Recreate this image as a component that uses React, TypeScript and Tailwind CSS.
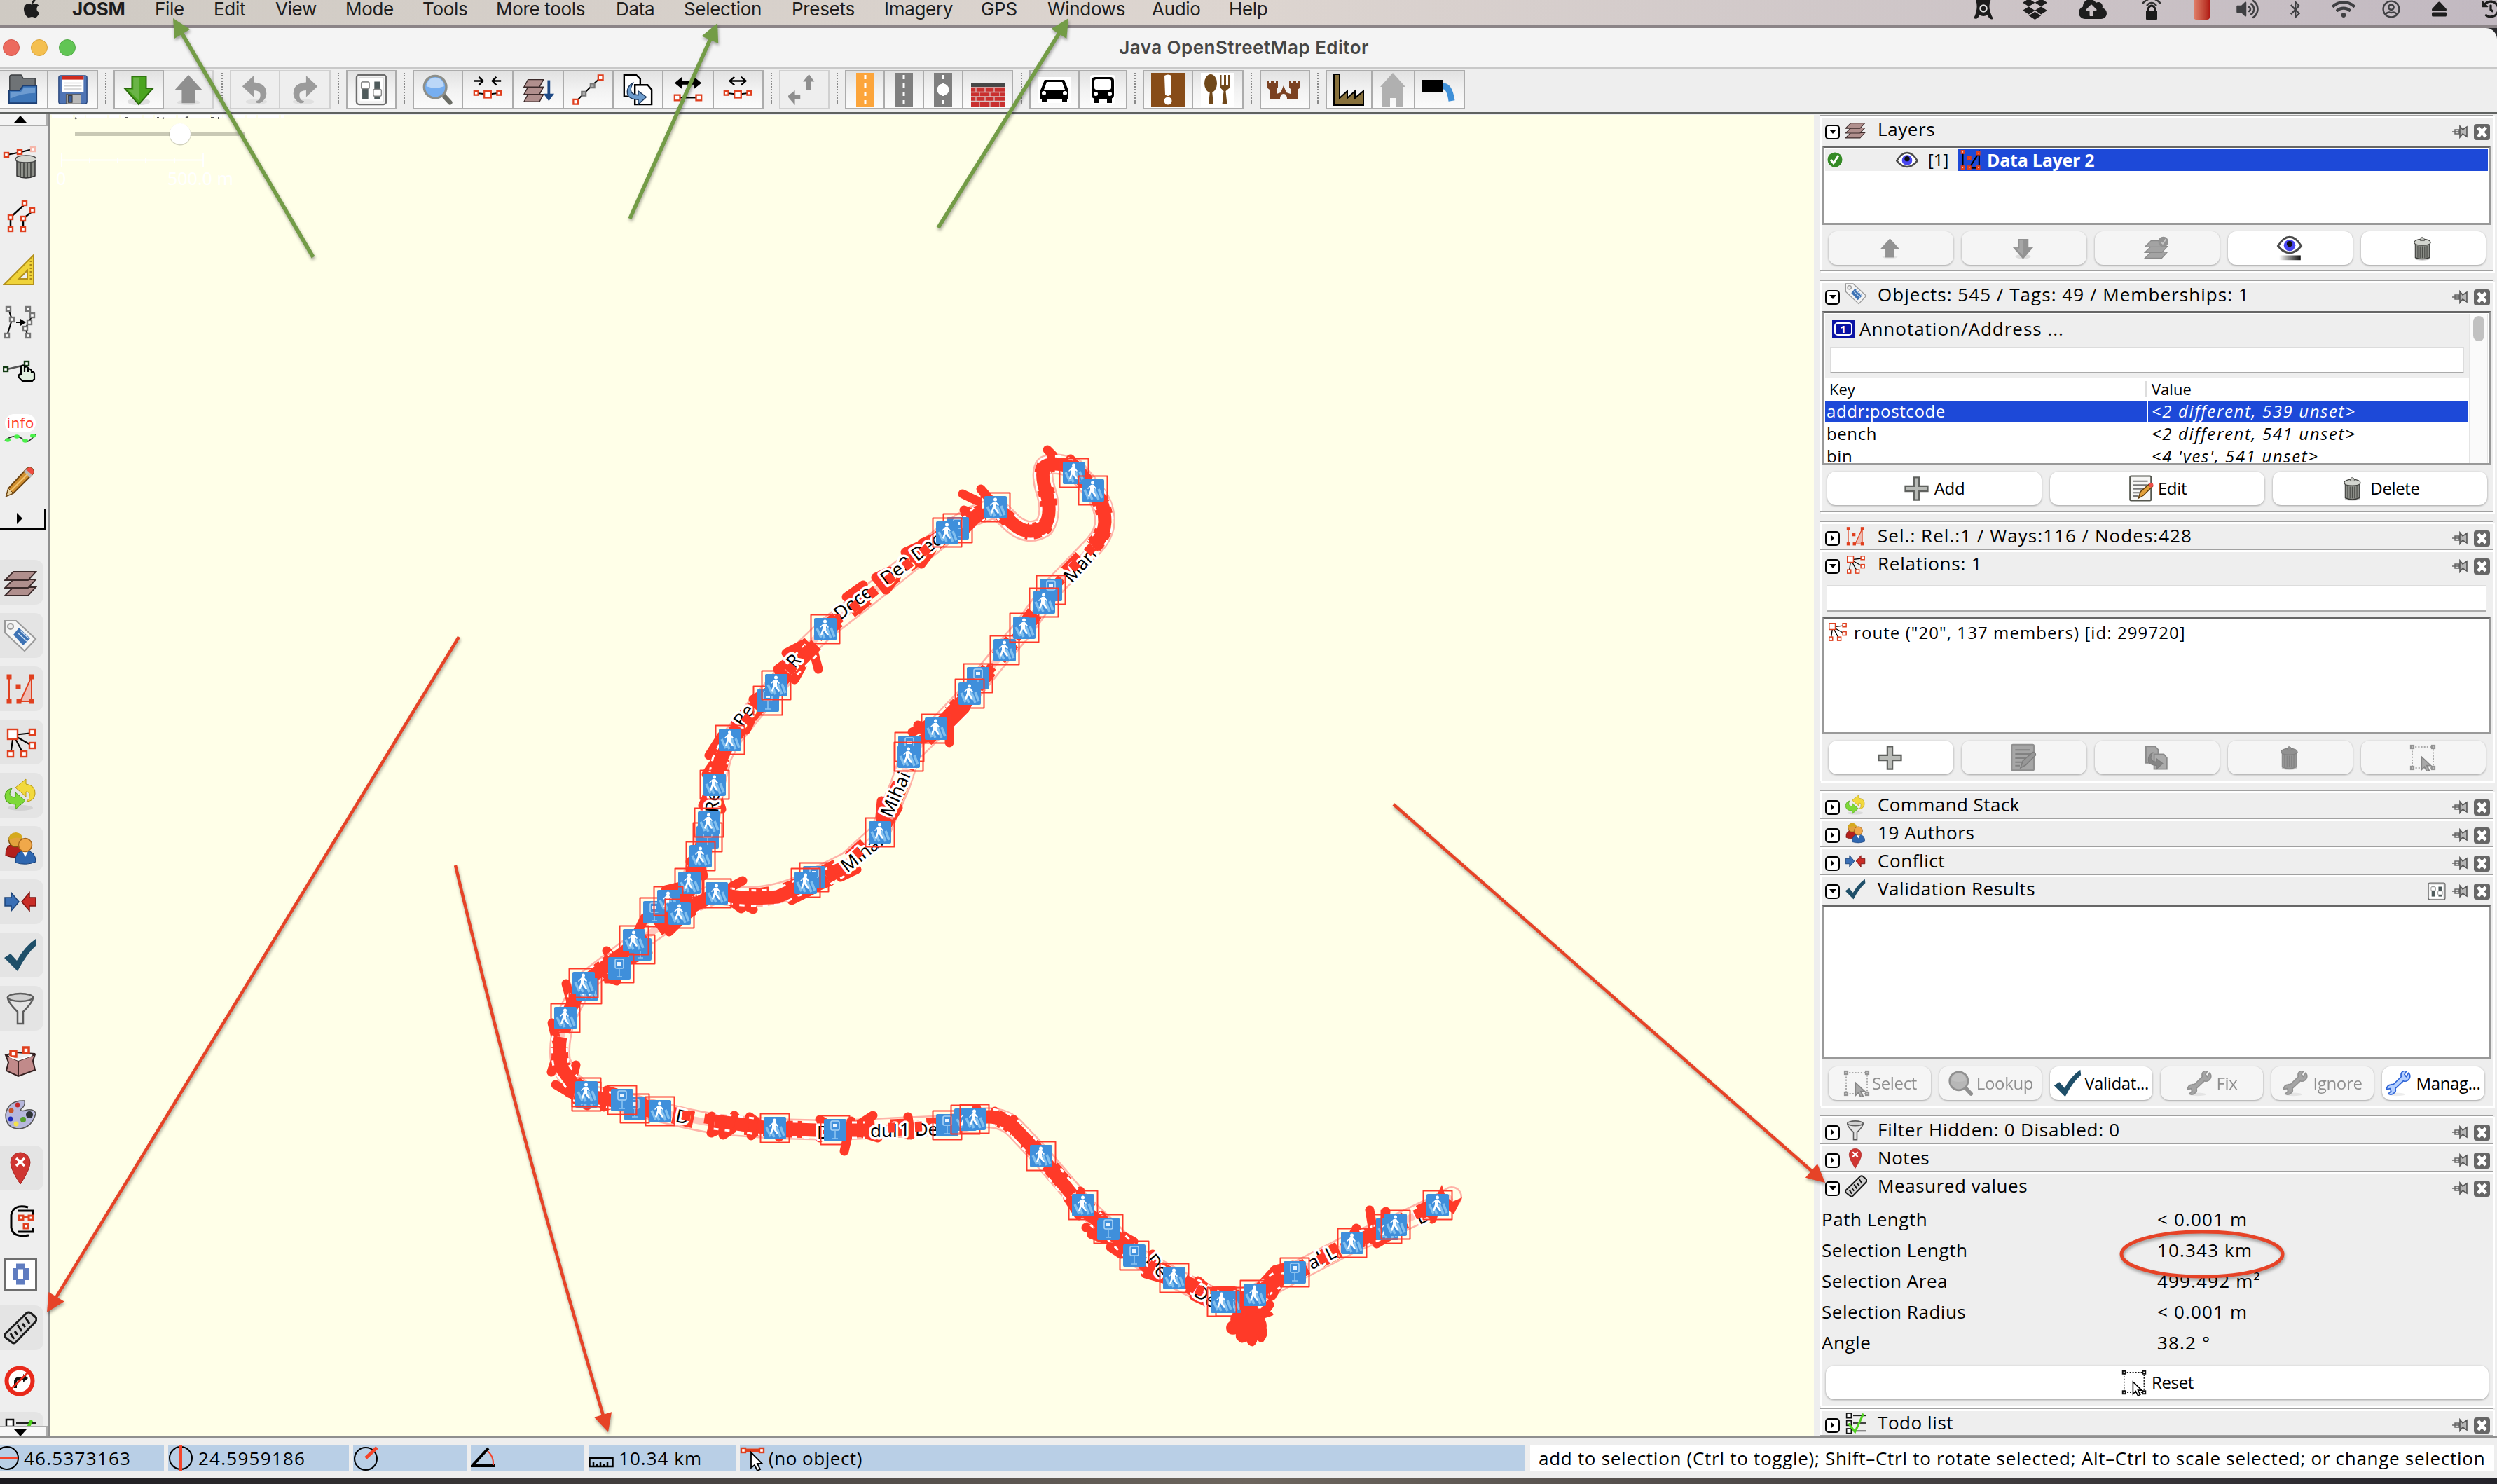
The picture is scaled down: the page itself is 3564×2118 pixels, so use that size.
import React from "react";
import { FaApple, FaDropbox, FaBluetoothB, FaWifi, FaEject, FaVolumeUp, FaRegUserCircle, FaHistory, FaCloudUploadAlt } from "react-icons/fa";

type P = { className?: string };
const RED = "#e0401f";
const GRAY = "#8f8f8f";

function Svg({ children, className = "w-12 h-12", box = "0 0 48 48" }: { children: React.ReactNode; className?: string; box?: string }) {
  return (
    <svg viewBox={box} className={`shrink-0 block ${className}`} fill="none">
      {children}
    </svg>
  );
}

/* small hollow node square used all over the editor icons */
function N({ x, y, s = 6, c = RED, w = 2.4, f = "#fff" }: { x: number; y: number; s?: number; c?: string; w?: number; f?: string }) {
  return <rect x={x - s / 2} y={y - s / 2} width={s} height={s} fill={f} stroke={c} strokeWidth={w} />;
}

/* ---------- generic icons ---------- */
const Folder = ({ className }: P) => (
  <Svg className={className}>
    <path d="M5 22V5q0-3 3-3h14l3 5h18v18H5z" fill="#6f7376" stroke="#3b3e40" strokeWidth="1.5" />
    <path d="M4 44V25h16l5-7h20q0 0 0 2v24z" fill="#3f77b9" stroke="#1d3f73" strokeWidth="2" />
    <path d="M6 27h16l4-6h17v8q-18 0-37 8z" fill="#6d9bd0" />
  </Svg>
);
const Floppy = ({ className }: P) => (
  <Svg className={className}>
    <rect x="3" y="3" width="42" height="42" rx="3" fill="#4f74b4" stroke="#2c4a80" strokeWidth="1.5" />
    <rect x="8" y="4" width="32" height="24" fill="#fff" />
    <rect x="8" y="4" width="32" height="5" fill="#cf2a1d" />
    <path d="M11 14h26M11 18.500h26M11 23h26" stroke="#d0d0d0" strokeWidth="1.5" />
    <rect x="14" y="31" width="22" height="14" fill="#b8b8b8" stroke="#555" />
    <rect x="17" y="33" width="6" height="10" fill="#3c5f9d" stroke="#333" />
  </Svg>
);
const Down = ({ className, c = "#4aa41f", s = "#2a6a0c" }: P & { c?: string; s?: string }) => (
  <Svg className={className}>
    <ellipse cx="24" cy="42" rx="17" ry="5" fill="#000" opacity=".1" />
    <path d="M14 4h21v18h10L24 46 3 22h11z" fill={c} stroke={s} strokeWidth="2" />
    <path d="M16 6h8v34L8 24h8z" fill="#fff" opacity=".18" />
  </Svg>
);
const Up = ({ className, c = GRAY }: P & { c?: string }) => (
  <Svg className={className}>
    <ellipse cx="24" cy="43" rx="17" ry="4" fill="#000" opacity=".07" />
    <path d="M14 44h20V25h11L24 2 3 25h11z" fill={c} />
  </Svg>
);
const Undo = ({ className, flip }: P & { flip?: boolean }) => (
  <Svg className={className}>
    <g transform={flip ? "translate(48 0) scale(-1 1)" : undefined}>
      <ellipse cx="26" cy="42" rx="16" ry="4" fill="#000" opacity=".06" />
      <path d="M5 19 22 3v10q19 1 19 17 0 9-10 14-6 1-6-3 7-1 7-9 0-7-10-7v10z" fill="#9b9b9b" />
    </g>
  </Svg>
);
const Prefs = ({ className }: P) => (
  <Svg className={className}>
    <rect x="2" y="2" width="44" height="44" rx="4" fill="#f3f3f3" stroke="#6d6d6d" strokeWidth="2.500" />
    <rect x="6" y="6" width="36" height="36" fill="#fff" stroke="#d5d5d5" />
    <rect x="10.500" y="12" width="9" height="26" fill="#4f5b5c" />
    <rect x="28.500" y="12" width="9" height="26" fill="#4f5b5c" />
    <rect x="9" y="12.500" width="12" height="10" rx="2" fill="#fff" stroke="#888" strokeWidth="1.500" />
    <rect x="27" y="23.500" width="12" height="10" rx="2" fill="#fff" stroke="#888" strokeWidth="1.500" />
  </Svg>
);
const Loupe = ({ className, gray }: P & { gray?: boolean }) => (
  <Svg className={className}>
    <path d="m31 31 11 12" stroke={gray ? "#8c8c8c" : "#6b6d66"} strokeWidth="7" strokeLinecap="round" />
    <circle cx="20" cy="20" r="16.500" fill={gray ? "#b5b5b5" : "#76aef0"} stroke={gray ? "#8c8c8c" : "#8d8f8a"} strokeWidth="3.500" />
    <path d="M7 19a13 13 0 0 1 26 0q-13 5-26 0" fill="#fff" opacity={gray ? ".12" : ".5"} />
  </Svg>
);
const Join = ({ className, out }: P & { out?: boolean }) => (
  <Svg className={className}>
    {out ? (
      <path d="M13 11h22M19 5l-7 6 7 6M29 5l7 6-7 6" stroke="#000" strokeWidth="2.500" />
    ) : (
      <path d="M4 11h12M11 5l6 6-6 6M44 11H32M37 5l-6 6 6 6" stroke="#000" strokeWidth="2.500" />
    )}
    <path d="M6 29l18 2 18-2" stroke="#000" strokeWidth="2" />
    <N x={7} y={29} />
    <N x={41} y={29} />
    <N x={24} y={31} s={10} />
  </Svg>
);
const Split = ({ className }: P) => (
  <Svg className={className}>
    <path d="M12 14h24" stroke="#000" strokeWidth="5" />
    <path d="M15 5 4 14l11 9zM33 5l11 9-11 9z" fill="#000" />
    <path d="M8 36h32" stroke="#000" strokeWidth="2" />
    <N x={8} y={36} s={8} />
    <N x={40} y={36} s={8} />
  </Svg>
);
const LayersDown = ({ className }: P) => (
  <Svg className={className}>
    {[31, 20, 9].map((y) => (
      <path key={y} d={`M9 ${y}h23l-6 11H3z`} fill="#b08f8d" stroke="#3b2a2a" strokeWidth="1.500" />
    ))}
    <path d="M40 10v26" stroke="#1f4a86" strokeWidth="4" />
    <path d="M32 30h16l-8 11z" fill="#1f4a86" />
  </Svg>
);
const WayIcon = ({ className }: P) => (
  <Svg className={className}>
    <path d="M6 42 18 30 30 18 43 6" stroke="#000" strokeWidth="2" />
    <N x={43} y={6} s={7} />
    <N x={6} y={42} s={7} />
    <N x={18} y={30} c="#777" f="#aaa" />
    <N x={31} y={18} c="#777" f="#aaa" />
  </Svg>
);
const Dup = ({ className, gray }: P & { gray?: boolean }) => (
  <Svg className={className}>
    <path d="M4 2h18l6 6v26H4z" fill={gray ? "#a3a3a3" : "#fff"} stroke={gray ? "#858585" : "#000"} strokeWidth="2.500" />
    <path d="M20 17h19l6 7v22H20z" fill={gray ? "#a8a8a8" : "#fff"} stroke={gray ? "#858585" : "#000"} strokeWidth="2.500" />
    <path d="M17 14q-9 17 8 18v-6l12 9-12 11v-7Q6 38 9 24q2-7 8-10z" fill={gray ? "#808080" : "#6d9ccd"} stroke={gray ? "#777" : "#1f3b60"} strokeWidth="1.500" />
  </Svg>
);
const Swap = ({ className }: P) => (
  <Svg className={className}>
    <path d="M27 25V12h-5l9-11 8 11h-5v13zM18 38H10v9L-1 34l11-9v7h8z" fill="#8e8e8e" />
  </Svg>
);
const Road = ({ c, dot }: { c: string; dot?: boolean }) => (
  <Svg className="w-[26px] h-[48px]" box="0 0 26 48">
    <rect width="26" height="48" fill={c} />
    <path d="M13 3v6M13 15v6M13 27v6M13 39v6" stroke="#fff" strokeWidth="3" />
    {dot && <circle cx="13" cy="24" r="8.500" fill="#fff" />}
    {dot && <path d="M13 12v3M13 33v6" stroke={c} strokeWidth="4" />}
  </Svg>
);
const Wall = () => (
  <Svg className="w-12 h-12">
    <rect x="0" y="14" width="48" height="34" fill="#c9302f" />
    <rect x="0" y="14" width="48" height="6" fill="#474747" />
    <path d="M0 21h48M0 27.500h48M0 34h48M0 40.500h48M7 21v6M20 21v6M33 21v6M12 28v6M27 28v6M41 28v6M7 34v6M20 34v6M33 34v6M12 41v7M27 41v7M41 41v7" stroke="#d9c2c2" strokeWidth="1.300" />
  </Svg>
);
const Car = () => (
  <Svg>
    <rect x="0" y="6" width="48" height="37" fill="#fff" />
    <path d="M10 10h28l6 15v12H4V25z" fill="#000" />
    <path d="M13 13h22l4 11H9z" fill="#fff" />
    <circle cx="9" cy="29" r="3" fill="#fff" />
    <circle cx="39" cy="29" r="3" fill="#fff" />
    <path d="M6 35h7v6H6zM35 35h7v6h-7z" fill="#000" />
  </Svg>
);
const BusI = () => (
  <Svg>
    <rect x="6" y="3" width="36" height="41" rx="4" fill="#fff" />
    <rect x="8" y="6" width="32" height="31" rx="5" fill="#000" />
    <rect x="12" y="9" width="24" height="15" rx="3" fill="#fff" />
    <circle cx="14" cy="30" r="3" fill="#fff" />
    <circle cx="34" cy="30" r="3" fill="#fff" />
    <path d="M11 36h7v7h-7zM30 36h7v7h-7z" fill="#000" />
  </Svg>
);
const Exclaim = () => (
  <Svg>
    <rect width="48" height="48" fill="#874c18" />
    <path d="M19 4q5-3 10 0l-1 27q-4 4-8 0z" fill="#fff" />
    <circle cx="24" cy="40" r="5.500" fill="#fff" />
  </Svg>
);
const Food = () => (
  <Svg>
    <rect width="48" height="48" fill="#fff" />
    <ellipse cx="14" cy="15" rx="9" ry="13" fill="#70481a" />
    <path d="M13 25h3l2 20h-7zM27 3h2.500v15H33V3h3v15h3V3h2.500v18l-6 5 2 19h-7l2-19-5-5z" fill="#70481a" />
  </Svg>
);
const Castle = () => (
  <Svg className="w-12 h-12 -ml-1">
    <path d="M0 12h3v3h3v-3h4v3h3v-3h3v9l-2 2v7l6-2 4-10 4 10 6 2v-7l-2-2v-9h3v3h3v-3h4v3h3v-3h3v9l-4 3v14H29q0-8-5-8t-5 8H4V24l-4-3z" fill="#7b4222" />
  </Svg>
);
const Factory = () => (
  <Svg>
    <path d="M3 46V2h8v34l11-10v10l11-10v10l12-10v20z" fill="#87703b" stroke="#000" strokeWidth="2" />
  </Svg>
);
const Church = () => (
  <Svg className="w-9 h-12" box="0 0 36 48">
    <path d="M18 0 36 20h-3v28H22V36h-8v12H3V20H0z" fill="#b0b0b0" />
  </Svg>
);
const Tap = () => (
  <Svg>
    <rect x="0" y="10" width="30" height="18" fill="#000" />
    <path d="M30 19q9 0 12 21" stroke="#3f90d8" strokeWidth="9" />
  </Svg>
);

const Trash = ({ className, gray }: P & { gray?: boolean }) => (
  <Svg className={className} box="0 0 48 48">
    <ellipse cx="24" cy="44" rx="15" ry="3.500" fill="#000" opacity=".2" />
    <path d="M10 15h28v27q-14 6-28 0z" fill={gray ? "#909090" : "#8d8f89"} stroke={gray ? "#808080" : "#3a3b38"} strokeWidth="1.500" />
    <path d="M15 19v23M19.500 20v23M24 20v23M28.500 20v23M33 19v23" stroke={gray ? "#7c7c7c" : "#4c4e4a"} strokeWidth="1.600" />
    <path d="M8 13q0-7 16-7t16 7q-2 5-16 5T8 13z" fill={gray ? "#8b8b8b" : "#d3d5cf"} stroke={gray ? "#7c7c7c" : "#454643"} strokeWidth="1.500" />
    <path d="M20 9q0-7 4-7t4 7z" fill={gray ? "#8b8b8b" : "#bfc1bb"} stroke={gray ? "#7c7c7c" : "#454643"} />
  </Svg>
);
const Layers = ({ className, gray, check }: P & { gray?: boolean; check?: boolean }) => (
  <Svg className={className}>
    {[31, 20, 9].map((y) => (
      <path key={y} d={`M14 ${y}h32l-11 12H2z`} fill={gray ? "#a0a0a0" : "#b08f8d"} stroke={gray ? "#858585" : "#3b2a2a"} strokeWidth="1.800" />
    ))}
    {check && <circle cx="38" cy="11" r="10" fill="#8f8f8f" />}
    {check && <path d="m33 11 4 4 6-9" stroke="#c5c5c5" strokeWidth="2.500" />}
  </Svg>
);
const Eye = ({ className, bar }: P & { bar?: boolean }) => (
  <Svg className={className}>
    <path d="M2 20Q12 3 24 3t22 17Q36 33 24 33T2 20z" fill="#fff" stroke="#4b4b4b" strokeWidth="4" />
    <circle cx="24" cy="19" r="11" fill="#4846f0" />
    <circle cx="24" cy="16" r="5.500" fill="#111" />
    {bar && <rect x="4" y="38" width="41" height="9" fill="url(#fade)" />}
    {bar && (
      <defs>
        <linearGradient id="fade"><stop offset="0" stopColor="#000" stopOpacity="0" /><stop offset="1" stopColor="#111" /></linearGradient>
      </defs>
    )}
  </Svg>
);
const Tag = ({ className }: P) => (
  <Svg className={className}>
    <path d="M2 3h16l28 26-16 17L2 20z" fill="#f4f4f4" stroke="#9a9a9a" strokeWidth="2" />
    <circle cx="10" cy="11" r="4" fill="#eee" stroke="#9a9a9a" strokeWidth="2" />
    <path d="m22 13 16 15-10 10L14 23z" fill="#3d72b4" />
    <path d="m20 20 13 12M24 17l12 11" stroke="#cfe0f3" strokeWidth="1.600" />
  </Svg>
);
const Sel = ({ className }: P) => (
  <Svg className={className}>
    <path d="M8 7v35M40 7v35H24z" stroke={RED} strokeWidth="2" fill="#eebdb4" />
    {[[8, 7], [8, 42], [21, 21], [22, 42], [40, 7], [40, 42]].map(([x, y], i) => (
      <rect key={i} x={x - 3.500} y={y - 3.500} width="7" height="7" fill={RED} />
    ))}
  </Svg>
);
const Rel = ({ className }: P) => (
  <Svg className={className}>
    <path d="M14 14 10 42M14 14l15 28M14 14l28-3M14 14l28 16" stroke="#000" strokeWidth="2.200" />
    <N x={13} y={13} s={14} />
    <N x={41} y={10} s={8} />
    <N x={41} y={29} s={8} />
    <N x={10} y={41} s={8} />
    <N x={29} y={41} s={8} />
  </Svg>
);
const Stack = ({ className }: P) => (
  <Svg className={className}>
    <ellipse cx="24" cy="42" rx="18" ry="4" fill="#000" opacity=".08" />
    <path d="M17 13 32 1v7q14 2 13 14-1 10-12 11 5-4 4-10 0-4-5-4v7z" fill="#f2d93d" stroke="#b99a10" />
    <path d="M31 32 17 44v-7Q2 37 2 25q1-9 10-11-3 4-3 8 1 5 8 5v-7z" fill="#7ed938" stroke="#4a9b18" />
  </Svg>
);
const Authors = ({ className }: P) => (
  <Svg className={className}>
    <path d="M3 34q-1-17 14-17 12 0 13 15-13 8-27 2z" fill="#b3201d" stroke="#6c100d" />
    <circle cx="17" cy="12" r="9.500" fill="#e2a23c" stroke="#7e5510" strokeWidth="1.500" />
    <path d="M7 12Q8 1 18 1q9 1 9 9-10-4-20 2z" fill="#d5aa1e" />
    <path d="M17 44q-1-17 14-17t15 16q-14 6-29 1z" fill="#2f67b0" stroke="#173f77" />
    <path d="m27 28 4 8 4-8z" fill="#fff" />
    <circle cx="31" cy="19" r="9.500" fill="#f0a84a" stroke="#a5661a" strokeWidth="1.500" />
  </Svg>
);
const Conflict = ({ className }: P) => (
  <Svg className={className}>
    <path d="M2 18h9v-7l11 13-11 13v-7H2z" fill="#3a6fb5" stroke="#1d4479" strokeWidth="1.500" />
    <path d="M46 18h-9v-7L26 24l11 13v-7h9z" fill="#c92d27" stroke="#7d1512" strokeWidth="1.500" />
  </Svg>
);
const Check = ({ className }: P) => (
  <Svg className={className}>
    <path d="m1 28 9-6 9 10Q30 12 46 1l1 9Q33 22 20 47z" fill="#1f4f69" />
  </Svg>
);
const Funnel = ({ className }: P) => (
  <Svg className={className}>
    <path d="M6 9q0 6 14 20v17h8V29Q42 15 42 9z" fill="#e4e4e4" stroke="#5c5c5c" strokeWidth="2.500" />
    <ellipse cx="24" cy="8.500" rx="18" ry="5.500" fill="#d0d0d0" stroke="#5c5c5c" strokeWidth="2.500" />
  </Svg>
);
const Box = ({ className }: P) => (
  <Svg className={className}>
    <path d="m3 15 18 8 24-9-3 9 3 13-24 9-17-8 3-12z" fill="#c18a8a" stroke="#332020" strokeWidth="2" />
    <path d="M21 23v22" stroke="#402525" strokeWidth="2" />
    <path d="M3 15l14-4 28 2" stroke="#332020" strokeWidth="2" />
    <N x={14} y={13} s={8} w={3.500} />
    <N x={32} y={8} s={8} w={3.500} />
    <path d="M8 17l13 5 20-7" stroke="#fff" strokeWidth="2" />
  </Svg>
);
const Palette = ({ className }: P) => (
  <Svg className={className}>
    <path d="M30 4Q6 3 3 24q0 20 20 20 18-2 23-22-2-6-12-5-8 3-10 0 8-6 6-13z" fill="#b7b8dc" stroke="#555" strokeWidth="1.500" />
    <circle cx="20" cy="10" r="3.500" fill="#c3292b" />
    <circle cx="11" cy="18" r="3.500" fill="#c95428" />
    <circle cx="10" cy="30" r="3.500" fill="#1d28b8" />
    <circle cx="18" cy="37" r="3.500" fill="#f3e14d" />
    <circle cx="28" cy="31" r="4" fill="#56a02c" />
    <circle cx="37" cy="24" r="5" fill="#2e3436" />
  </Svg>
);
const Pin = ({ className }: P) => (
  <Svg className={className}>
    <path d="M24 47Q10 26 10 16a14 14 0 0 1 28 0q0 10-14 31z" fill="#cf3632" stroke="#a52421" />
    <path d="m18 10 12 11M30 10 18 21" stroke="#fff" strokeWidth="3.500" />
  </Svg>
);
const Head = ({ className }: P) => (
  <Svg className={className}>
    <path d="M35 4Q14-1 11 15v18q2 15 25 11M20 9h22v6M20 39h22v-5" stroke="#000" strokeWidth="3" />
    <path d="M26 18h14" stroke={RED} strokeWidth="2" />
    <N x={25} y={19} s={6} w={3} />
    <N x={39} y={19} s={6} w={3} />
    <N x={32} y={31} s={6} w={3} />
  </Svg>
);
const Octo = ({ className }: P) => (
  <Svg className={className}>
    <rect x="1.500" y="1.500" width="45" height="45" fill="#fff" stroke="#6d6d6d" strokeWidth="3" />
    <path d="M18 12.500h13M18 34.500h13M17 15v17M32 15v17" stroke="#5f7cc0" strokeWidth="8" />
  </Svg>
);
const Ruler = ({ className }: P) => (
  <Svg className={className}>
    <path d="M2 33 33 3q3-2 6 0l7 6q2 3 0 6L17 45q-3 2-5 0l-9-7q-2-2-1-5z" fill="#d0d0d0" stroke="#1c1c1c" strokeWidth="3" />
    <path d="m15 40-5-8M20 34l-4-5M26 29l-6-9M31 23l-4-5M37 18l-6-9" stroke="#111" strokeWidth="3" />
  </Svg>
);
const NoTurn = ({ className }: P) => (
  <Svg className={className}>
    <circle cx="23" cy="24" r="18.500" fill="#fff" stroke="#e8291b" strokeWidth="6" />
    <path d="M17 34V26q0-6 6-6h6" stroke="#111" strokeWidth="4" />
    <path d="m28 14 7 6-7 6z" fill="#111" />
    <path d="m10 36 26-25" stroke="#e8291b" strokeWidth="3" />
  </Svg>
);
const Todo = ({ className }: P) => (
  <Svg className={className}>
    {[8, 24, 41].map((y) => (
      <g key={y}>
        <rect x="4" y={y - 5} width="10" height="10" fill="#fff" stroke="#111" strokeWidth="2.500" />
        <path d={`M18 ${y}h28`} stroke="#222" strokeWidth="2.500" />
      </g>
    ))}
    <path d="m8 25 14 18L40 4" stroke="#4ed11d" strokeWidth="4.500" />
  </Svg>
);
const DelNode = ({ className }: P) => (
  <Svg className={className} box="0 0 48 48">
    <path d="M6 13 26 9 46 4" stroke="#000" strokeWidth="2" />
    <N x={5} y={13} />
    <N x={24} y={9} />
    <N x={43} y={5} c="#f5b7ab" />
    <path d="M20 22h26v21q-13 6-26 0z" fill="#8d8f89" stroke="#333" strokeWidth="1.500" />
    <path d="M25 25v20M30 25v20M35 25v20M40 25v20" stroke="#4c4e4a" strokeWidth="2" />
    <path d="M18 20q0-6 15-6t15 6q-2 4-15 4t-15-4z" fill="#d3d5cf" stroke="#444" strokeWidth="1.500" />
  </Svg>
);
const Parallel = () => (
  <Svg>
    <path d="M11 43V26L33 6M29 43V28L44 16" stroke="#000" strokeWidth="2.500" />
    {[[11, 43], [11, 26], [31, 6], [29, 43], [29, 28], [42, 16]].map(([x, y], i) => (
      <N key={i} x={x} y={y} />
    ))}
  </Svg>
);
const SetSquare = () => (
  <Svg>
    <path d="M2 46 44 4v42z" fill="#efd33a" stroke="#b3901c" strokeWidth="2" />
    <path d="M23 38 35 26v12z" fill="#eee" stroke="#b3901c" strokeWidth="2" />
    <path d="M40 12v30" stroke="#a8861a" strokeWidth="3" strokeDasharray="2 3" />
  </Svg>
);
const Improve = () => (
  <Svg>
    <path d="m8 5 5 15L6 43M36 5l6 9-5 10-5 9 4 10M19 24h12" stroke="#000" strokeWidth="2" />
    <path d="m25 19 8 5-8 5z" fill="#000" />
    {[[8, 5], [13, 20], [6, 43], [36, 5], [42, 14], [38, 24], [32, 33], [36, 43]].map(([x, y], i) => (
      <N key={i} x={x} y={y} c="#777" />
    ))}
  </Svg>
);
const Hand = () => (
  <Svg className="w-12 h-12 -mt-[10px]">
    <path d="M6 20 36 13" stroke="#555" strokeWidth="2.500" />
    <N x={4} y={20} c="#123a12" />
    <N x={34} y={12} c="#123a12" />
    <path d="M23 32q-2-5 3-5V16q3-3 5 0v8-6q2-3 5 0v6-3q3-3 5 1v2q4-1 4 3v7l-3 3H28z" fill="#dfeedd" stroke="#000" strokeWidth="2.200" />
  </Svg>
);
const Info = () => (
  <div className="w-[50px] flex flex-col items-center">
    <div className="bg-white rounded-full leading-[26px] h-[26px] px-[2px] text-[20px] tracking-[0.02em] text-[#ff3728] font-['DejaVu_Sans']">info</div>
    <Svg className="w-12 h-4" box="0 0 48 16">
      <path d="M2 12Q10 5 18 6t12 6 16-9" stroke="#222" strokeWidth="1.500" />
      {[[6, 11], [19, 6], [31, 12], [42, 5]].map(([x, y], i) => (
        <ellipse key={i} cx={x} cy={y} rx="4" ry="2.800" fill="#4bf04b" />
      ))}
    </Svg>
  </div>
);
const Pencil = () => (
  <Svg>
    <path d="m5 44 3-11L34 5q4-3 8 0 3 4 0 8L15 40z" fill="#d29032" stroke="#6e4511" strokeWidth="2" />
    <path d="m5 44 3-11 7 7z" fill="#ead3a0" stroke="#6e4511" />
    <path d="m33 6 9 8 2-4q0-5-5-7-3 0-6 3z" fill="#f04b41" />
    <path d="m30 9 9 9 3-4-9-8z" fill="#b9b9b9" />
    <path d="M12 36 36 12" stroke="#f1c36f" strokeWidth="2" />
  </Svg>
);
const Plus = ({ className }: P) => (
  <Svg className={className}>
    <path d="M19 2h10v17h17v10H29v17H19V29H2V19h17z" fill="#b9bbb7" stroke="#5f615e" strokeWidth="3" />
  </Svg>
);
const EditI = ({ className, gray }: P & { gray?: boolean }) => (
  <Svg className={className}>
    <rect x="4" y="2" width="38" height="44" rx="2" fill={gray ? "#a3a3a3" : "#f6f6f4"} stroke={gray ? "#8a8a8a" : "#55574f"} strokeWidth="2.500" />
    <path d="M10 11h26M10 18h26M10 25h18M10 32h12M10 38h8" stroke={gray ? "#7c7c7c" : "#777"} strokeWidth="2.500" />
    <path d="m19 42 4-12 17-15q5 0 5 5L28 37z" fill={gray ? "#939393" : "#e2a13b"} stroke={gray ? "#777" : "#5e3b0c"} strokeWidth="1.800" />
    {!gray && <circle cx="42" cy="18" r="4" fill="#ee4e49" />}
  </Svg>
);
const Marquee = ({ className, gray }: P & { gray?: boolean }) => {
  const c = gray ? "#8f8f8f" : "#111";
  return (
    <Svg className={className}>
      <rect x="6" y="6" width="36" height="36" stroke={c} strokeWidth="1.800" strokeDasharray="2.500 2.500" />
      {[[6, 6], [42, 6], [6, 42], [42, 42]].map(([x, y], i) => (
        <N key={i} x={x} y={y} s={5} c={c} w={2.500} f={gray ? "#bbb" : "#fff"} />
      ))}
      <path d="M22 23v22l5-5 4 8 4-2-4-8h7z" fill={gray ? "#a5a5a5" : "#fff"} stroke={gray ? "#808080" : "#000"} strokeWidth="2" />
    </Svg>
  );
};
const Wrench = ({ className, blue }: P & { blue?: boolean }) => (
  <Svg className={className}>
    <ellipse cx="20" cy="44" rx="16" ry="3" fill="#000" opacity=".07" />
    <path d="M43 4q5 8-2 14-4 3-8 1L18 33q2 6-3 9-5 4-10 1l5-5-2-5-6 2q0-8 7-9 3-1 5 0l15-15q-2-7 4-10 4-2 6-1l-4 7 3 4z" fill={blue ? "#b5d0ff" : "#a2a2a2"} stroke={blue ? "#2c62d6" : "#8d8d8d"} strokeWidth="2.200" />
  </Svg>
);

/* ---------- menu bar ---------- */
const menus: [string, string][] = [
  ["File", "w-[84px]"], ["Edit", "w-[88px]"], ["View", "w-[100px]"], ["Mode", "w-[110px]"], ["Tools", "w-[105px]"],
  ["More tools", "w-[171px]"], ["Data", "w-[97px]"], ["Selection", "w-[154px]"], ["Presets", "w-[132px]"],
  ["Imagery", "w-[138px]"], ["GPS", "w-[95px]"], ["Windows", "w-[149px]"], ["Audio", "w-[110px]"], ["Help", "w-[90px]"],
];

function MenuBar() {
  return (
    <div className="h-[40px] shrink-0 flex items-start bg-linear-to-r from-[#cfcac3] via-[#ddd5d0] to-[#c2b9c1] border-b-4 border-[#8b8487] text-[#1d1d1d] font-[Inter] text-[26px] leading-[25px]">
      <div className="w-[103px] pl-[32px] shrink-0"><FaApple className="w-[26px] h-[30px] -mt-[3px]" /></div>
      <div className="w-[118px] shrink-0 font-bold tracking-[-0.01em]">JOSM</div>
      {menus.map(([m, w]) => (
        <div key={m} className={`${w} shrink-0 whitespace-nowrap tracking-[-0.012em]`}>{m}</div>
      ))}
      <div className="flex ml-[949px] h-[26px] items-center">
        <div className="w-[75px] shrink-0 flex justify-center">
          <Svg className="w-8 h-8" box="0 0 32 32"><path d="M4 0q12 6 24 0-8 12 2 30-6 2-8-6-6 4-12 0-2 8-8 5Q10 14 4 0z" fill="#1b1b1b" /><circle cx="16" cy="15" r="4.500" stroke="#ddd" strokeWidth="2.500" /></Svg>
        </div>
        <div className="w-[73px] shrink-0 flex justify-center"><FaDropbox className="w-[37px] h-[34px]" /></div>
        <div className="w-[92px] shrink-0 flex justify-center"><FaCloudUploadAlt className="w-[40px] h-[34px]" /></div>
        <div className="w-[76px] shrink-0 flex justify-center">
          <Svg className="w-8 h-8" box="0 0 32 32"><path d="M3 8Q16-6 29 8M9 11q7-8 14 0" stroke="#333" strokeWidth="2.500" /><rect x="8" y="18" width="16" height="13" rx="1" fill="#1b1b1b" /><path d="M11 19v-4q5-8 10 0v4" stroke="#1b1b1b" strokeWidth="3" /></Svg>
        </div>
        <div className="w-[67px] shrink-0 flex justify-center"><div className="w-[23px] h-[30px] bg-linear-to-r from-[#e0806a] to-[#b01712] rounded-b-sm" /></div>
        <div className="w-[64px] shrink-0 flex justify-center text-[#3f3f42]"><FaVolumeUp className="w-[36px] h-[28px]" /></div>
        <div className="w-[72px] shrink-0 flex justify-center text-[#3f3f42]"><FaBluetoothB className="w-[20px] h-[27px]" /></div>
        <div className="w-[66px] shrink-0 flex justify-center text-[#3f3f42]"><FaWifi className="w-[34px] h-[28px]" /></div>
        <div className="w-[69px] shrink-0 flex justify-center text-[#3f3f42]"><FaRegUserCircle className="w-[26px] h-[26px]" /></div>
        <div className="w-[69px] shrink-0 flex justify-center"><FaEject className="w-[23px] h-[24px]" /></div>
        <div className="w-[78px] shrink-0 flex justify-center"><FaHistory className="w-[26px] h-[26px]" /></div>
      </div>
    </div>
  );
}

/* ---------- toolbar ---------- */
type Tool = [string, React.ReactNode, boolean?];
const i44 = "w-[46px] h-[46px]";
const groups: Tool[][] = [
  [["w-[69px] pr-[4px]", <Folder className={i44} />], ["w-[71px]", <Floppy className={i44} />]],
  [["w-[72px]", <Down className={i44} />], ["w-[71px]", <Up className={i44} />, true]],
  [["w-[72px]", <Undo className={i44} />, true], ["w-[72px]", <Undo className={i44} flip />, true]],
  [["w-[72px]", <Prefs className={i44} />]],
  [
    ["w-[72px]", <Loupe className={i44} />], ["w-[72px]", <Join className={i44} />], ["w-[72px]", <LayersDown className={i44} />],
    ["w-[71px]", <WayIcon className={i44} />], ["w-[71px]", <Dup className={i44} />], ["w-[72px]", <Split className={i44} />],
    ["w-[71px]", <Join className={i44} out />],
  ],
  [["w-[72px]", <Swap className={i44} />, true]],
  [["w-[57px]", <Road c="#fca53b" />], ["w-[56px]", <Road c="#7f7f7f" />], ["w-[56px]", <Road c="#7f7f7f" dot />], ["w-[71px]", <Wall />]],
  [["w-[72px]", <Car />], ["w-[68px]", <BusI />]],
  [["w-[72px]", <Exclaim />], ["w-[72px]", <Food />]],
  [["w-[72px]", <Castle />]],
  [["w-[67px]", <Factory />], ["w-[61px]", <Church />], ["w-[71px]", <Tap />]],
];

function Toolbar() {
  return (
    <div className="h-[62px] shrink-0 bg-[#eeeeee] flex items-start pt-[2px]">
      {groups.map((g, i) => (
        <React.Fragment key={i}>
          {i > 0 && (
            <div className="w-[22.4px] shrink-0 h-[56px] flex justify-center py-1">
              <div className="h-[44px] border-l-2 border-dotted border-[#8a8a8a]" />
            </div>
          )}
          {g.map(([w, icon, off], j) => (
            <div
              key={j}
              className={`${w} h-[56px] shrink-0 flex items-center justify-center border-y-2 border-r-2 ${j === 0 && i > 0 ? "border-l-2" : ""} ${off ? "border-[#d0d0d0] bg-[#eeeeee]" : "border-[#acacac] bg-linear-to-b from-[#e2e2e2] via-[#f2f2f2] to-[#fbfbfb]"}`}
            >
              {icon}
            </div>
          ))}
        </React.Fragment>
      ))}
    </div>
  );
}

/* ---------- left column ---------- */
const modes = [<DelNode />, <Parallel />, <SetSquare />, <Improve />, <Hand />, <Info />, <Pencil />];
const k = "w-[48px] h-[48px]";
const toggles: [React.ReactNode, boolean][] = [
  [<Layers className={k} />, true], [<Tag className={k} />, true], [<Sel className={k} />, true], [<Rel className={k} />, true],
  [<Stack className={k} />, true], [<Authors className={k} />, true], [<Conflict className={k} />, true], [<Check className={k} />, true],
  [<Funnel className={k} />, true], [<Box className={k} />, false], [<Palette className={k} />, false], [<Pin className={k} />, true],
  [<Head className={k} />, false], [<Octo className={k} />, false], [<Ruler className={k} />, true], [<NoTurn className={k} />, false],
  [<Todo className={k} />, true],
];

function LeftBar() {
  return (
    <div className="w-[71px] shrink-0 bg-[#eeeeee] border-r-3 border-[#8f8f8f] flex flex-col h-[1890px]">
      <div className="h-[18px] shrink-0 border-b-2 border-r-2 border-[#acacac] bg-[#f4f4f4] flex items-center pl-[20px]">
        <div className="border-x-[9px] border-x-transparent border-b-[10px] border-b-black" />
      </div>
      <div className="pt-[14px] shrink-0">
        {modes.map((m, i) => (
          <div key={i} className="h-[76px] pl-[4px] flex items-center">{m}</div>
        ))}
      </div>
      <div className="h-[30px] w-[65px] shrink-0 border-r-2 border-b-2 border-black flex items-center pl-[24px]">
        <div className="border-y-[8px] border-y-transparent border-l-[8px] border-l-black" />
      </div>
      <div className="mt-[43px] h-[1236px] overflow-hidden flex flex-col gap-[12px] shrink-0">
        {toggles.map(([t, on], i) => (
          <div key={i} className={`w-[62px] h-[64px] shrink-0 rounded-r-[12px] pl-[5px] flex items-center ${on ? "bg-[#e4e4e4]" : ""}`}>{t}</div>
        ))}
      </div>
      <div className="h-[19px] shrink-0 border-y-2 border-r-2 border-[#acacac] bg-[#f8f8f8] flex items-center pl-[20px]">
        <div className="border-x-[9px] border-x-transparent border-t-[10px] border-t-black" />
      </div>
    </div>
  );
}

/* ---------- map ---------- */
const loop =
  "M984 1262L1000 1222L1012 1174L1020 1120L1030 1080L1042 1056L1075 1015L1108 978L1150 925L1178 898L1230 858L1352 760L1385 738L1421 724L1440 742Q1465 768 1490 752Q1502 735 1494 705Q1484 675 1492 665Q1505 658 1533 668L1560 700Q1577 720 1577 745Q1576 765 1555 785L1500 842L1462 896L1434 928L1384 990L1336 1040L1300 1075L1285 1120L1256 1188L1210 1230L1150 1260Q1089 1290 1023 1275L984 1290";
const tail =
  "M984 1262L970 1303L905 1348L833 1403L807 1453Q796 1490 800 1515L812 1540L837 1562L888 1572L942 1587Q1000 1602 1037 1606L1106 1611L1192 1613L1352 1606L1391 1597Q1430 1590 1450 1612L1486 1650L1546 1720L1582 1754L1619 1792L1676 1824L1744 1858L1791 1848L1848 1816L1930 1774L1992 1748L2051 1720L2072 1708";
const solid = [
  "M1430 730L1440 742Q1465 768 1490 752Q1502 735 1494 705Q1484 675 1492 665Q1505 658 1533 668M1565 705Q1577 720 1577 745Q1576 765 1560 780",
  "M1025 1275Q1060 1285 1110 1280L1150 1262M1180 1252L1205 1238", "M1020 1120L1028 1085L1042 1056", "M1130 955L1165 920", "M1370 760L1400 730",
  "M1336 1040L1384 990L1375 1010L1350 1035", "M984 1262L970 1303L1023 1275", "M905 1348L833 1403L807 1453", "M800 1480Q796 1500 802 1525L820 1550",
  "M1020 1600L1106 1611L1165 1613M1200 1613L1235 1613", "M1400 1595Q1430 1590 1450 1612L1478 1642M1495 1662L1530 1705", "M1550 1730L1582 1754L1619 1792L1640 1810",
  "M820 1560L900 1576", "M1744 1858L1791 1848L1830 1822", "M1930 1774L2000 1745", "M1690 1828L1740 1856",
];
const spikes = [
  "M1495 642L1503 650", "M1528 655L1535 665", "M1374 705L1395 715", "M1400 698L1412 712", "M1376 728L1395 735", "M1316 775L1340 765", "M1292 788L1310 780",
  "M1315 805L1330 785", "M1250 824L1270 815", "M1265 842L1280 822", "M1208 852L1232 835", "M1225 870L1240 850", "M1168 955L1160 925", "M1122 932L1145 920", "M1110 955L1130 940",
  "M1134 970L1145 950", "M1075 998L1100 985", "M1050 1030L1070 1010", "M1065 1042L1078 1015", "M1012 1078L1030 1050", "M1008 1105L1025 1080", "M1030 1155L1022 1130", "M1003 1150L1012 1130",
  "M985 1230L1000 1215", "M1004 1250L1000 1235", "M1060 1257L1040 1268", "M1075 1298L1050 1285", "M1058 1297L1035 1280", "M1190 1240L1170 1260", "M1223 1241L1200 1252", "M1185 1258L1160 1268", "M1130 1285L1160 1270",
  "M1282 1153L1265 1180", "M1258 1143L1256 1165", "M1302 1045L1330 1030", "M1355 1060L1355 1020", "M1310 1035L1330 1040", "M1335 1050L1315 1055", "M955 1330L975 1310", "M990 1300L975 1310",
  "M950 1270L984 1262", "M920 1310L905 1340", "M925 1360L900 1370", "M866 1357L880 1375", "M858 1392L880 1400", "M808 1404L815 1430", "M788 1460L798 1500", "M787 1530L800 1490", "M822 1520L812 1560",
  "M793 1548L830 1570", "M822 1570L838 1578", "M866 1556L880 1560", "M862 1580L890 1570", "M1016 1593L1030 1605", "M1015 1617L1035 1608", "M1032 1620L1050 1608", "M1048 1592L1060 1608",
  "M1072 1621L1085 1608", "M1070 1594L1085 1605", "M1112 1623L1106 1611", "M1170 1624L1185 1610", "M1170 1598L1190 1610", "M1205 1643L1215 1600", "M1246 1592L1215 1612L1253 1624", "M1296 1594L1300 1620",
  "M1296 1620L1310 1606", "M1394 1582L1400 1600", "M1420 1586L1420 1600", "M1447 1598L1450 1615", "M1542 1700L1546 1725", "M1524 1710L1540 1735", "M1572 1735L1575 1755", "M1550 1752L1575 1760", "M1558 1762L1580 1770",
  "M1585 1780L1600 1790", "M1618 1772L1605 1765", "M1645 1790L1650 1800", "M1635 1818L1660 1825", "M1710 1828L1735 1850", "M1704 1850L1730 1862", "M1725 1843L1760 1842", "M1812 1862L1800 1878",
  "M1790 1845L1820 1812L1845 1806", "M1815 1850L1830 1825", "M1936 1753L1925 1775", "M1955 1727L1962 1770", "M1978 1729L1975 1765", "M1965 1775L1990 1760", "M2044 1740L2050 1720",
];
const walk: [number, number][] = [
  [1533, 675], [1560, 700], [1421, 724], [1352, 760], [1178, 898], [1108, 978], [1042, 1056], [1020, 1120], [1012, 1174], [1000, 1222], [984, 1260],
  [1023, 1275], [1150, 1260], [1256, 1188], [1297, 1080], [1336, 1040], [1384, 990], [1434, 928], [1462, 896], [1490, 860], [954, 1286], [970, 1304],
  [905, 1342], [838, 1412], [833, 1403], [807, 1453], [837, 1565], [837, 1559], [942, 1586], [1106, 1610], [1378, 1598], [1391, 1597], [1486, 1650],
  [1546, 1720], [1676, 1824], [1756, 1858], [1744, 1858], [1791, 1848], [1930, 1774], [1980, 1754], [1992, 1748], [2052, 1720],
];
const bus: [number, number][] = [
  [1367, 754], [1096, 1000], [1010, 1195], [1162, 1252], [1298, 1066], [1396, 968], [1500, 842], [934, 1302], [914, 1355], [884, 1382], [906, 1582],
  [888, 1570], [1192, 1613], [1352, 1606], [1582, 1754], [1619, 1792], [1848, 1816],
];
const labels: [number, number, number, string][] = [
  [1268, 1166, -66, "Mihai V"], [1206, 1242, -38, "Mihai"], [1196, 882, -38, "Dece"], [1262, 832, -37, "De2"], [1306, 798, -37, "Dec"], [1056, 1036, -54, "Re"],
  [1020, 1160, -86, "Re"], [1526, 830, -48, "Mari"], [1166, 1620, 0, "D"], [1242, 1618, 0, "dul"], [1284, 1616, 0, "1 De"], [1638, 1796, 50, "De"], [1705, 1844, 35, "De"],
  [1870, 1808, -27, "al L"], [2024, 1744, -27, "L"], [964, 1596, 12, "D"], [1130, 952, -48, "R"],
];

function WalkSign({ x, y }: { x: number; y: number }) {
  return (
    <g transform={`translate(${x - 16} ${y - 16})`}>
      <rect x="-4.500" y="-4.500" width="41" height="41" fill="none" stroke="#ff3a2a" strokeWidth="2" />
      <rect width="32" height="32" rx="2" fill="#3f8fdb" />
      <path d="M4 15l6 13M11 20l4 9M18 14l6 15M24 14l5 13" stroke="#83c0ee" strokeWidth="3.500" />
      <circle cx="15.500" cy="5" r="2.500" fill="#fff" />
      <path d="M13 8h4l4 5-1 1-3-2v5l4 7-2 1-5-7-3 7-2-1 3-9v-4l-3 3-1-1z" fill="#fff" />
    </g>
  );
}
function BusSign({ x, y }: { x: number; y: number }) {
  return (
    <g transform={`translate(${x - 16} ${y - 16})`}>
      <rect x="-4.500" y="-4.500" width="41" height="41" fill="none" stroke="#ff3a2a" strokeWidth="2" />
      <rect width="32" height="32" rx="2" fill="#3f8fdb" />
      <rect x="10" y="3" width="12" height="13" rx="2" fill="none" stroke="#a9d3f5" strokeWidth="1.600" />
      <rect x="13" y="7" width="6" height="5" fill="#e8f4ff" />
      <path d="M16 17v11M12 28h8" stroke="#8fc6f2" strokeWidth="1.500" />
    </g>
  );
}

function MapView() {
  return (
    <div className="relative w-[2518px] h-[1886px] shrink-0 bg-[#ffffe8] overflow-hidden">
      <svg viewBox="71 164 2518 1886" className="absolute inset-0 w-full h-full" fill="none" strokeLinejoin="round">
        {[loop, tail].map((d) => (
          <g key={d}>
            <path d={d} stroke="#ffb3a8" strokeWidth="30" strokeLinecap="round" />
            <path d={d} stroke="#ffffe8" strokeWidth="25" strokeLinecap="round" />
            <path d={d} stroke="#ffc9be" strokeWidth="10" />
            <path d={d} stroke="#ff3a28" strokeWidth="24" strokeDasharray="30 22" />
          </g>
        ))}
        {spikes.map((d) => (
          <path key={d} d={d} stroke="#ff3a28" strokeWidth="13" strokeLinecap="round" />
        ))}
        {solid.map((d) => (
          <path key={d} d={d} stroke="#fff" strokeWidth="25" strokeDasharray="7 9" />
        ))}
        {solid.map((d) => (
          <path key={d} d={d} stroke="#ff3a28" strokeWidth="19" />
        ))}
        {labels.map(([x, y, r, t], i) => (
          <text key={i} x={x} y={y} transform={`rotate(${r} ${x} ${y})`} dy="5" fontSize="26" fill="#000" stroke="#fff" strokeWidth="7" paintOrder="stroke" className="font-['Noto_Sans']">
            {t}
          </text>
        ))}
        <path d="M1042 1056L1108 978L1178 898L1230 858L1352 760L1421 724M1560 780L1500 842L1462 896L1384 990M984 1262L905 1348L833 1403M942 1587L1106 1611" stroke="#ff3a28" strokeWidth="14" strokeDasharray="12 20" />
        <path d="M1192 1613L1352 1606M1640 1805L1744 1858M1848 1816L1930 1774L2051 1720M1256 1188L1205 1235L1150 1260" stroke="#ff3a28" strokeWidth="14" strokeDasharray="10 28" />
        <path d="M2046 1715l12-24 5 16 10 8 14-6-12 24-8-6-16 8z" fill="#ff3a28" />
        <path d="M1770 1850l22-2 2 24q16-4 22 4-8 4-16 4 8 6 6 16 4 8-4 18-6 2-8-8 0 10-6 14-6 0-8-8-8 6-12 0-4-2-2-10-10 4-14-4-2-8 6-12-2-10 8-14z" fill="#ff3a28" stroke="#ff3a28" strokeWidth="3" />
        {bus.map(([x, y], i) => (
          <BusSign key={i} x={x} y={y} />
        ))}
        {walk.map(([x, y], i) => (
          <WalkSign key={i} x={x} y={y} />
        ))}
        {/* zoom slider and scale */}
        <path d="M107 191H349" stroke="#c9c9b5" strokeWidth="6" />
        <circle cx="257" cy="192" r="15.500" fill="#000" opacity=".18" />
        <circle cx="257" cy="191" r="15" fill="#fff" />
        <path d="M88 219v20M290 219v20M88 228.500H290M128 225v7M168 225v7M208 225v7M249 225v7" stroke="#fff" strokeWidth="2" />
        <text x="80" y="264" fontSize="25" fill="#fff" className="font-['Noto_Sans']">0</text>
        <text x="239" y="264" fontSize="25" fill="#fff" className="font-['Noto_Sans']">500.0 m</text>
        <path d="M74 166H405" stroke="#fff" strokeWidth="5" strokeDasharray="30 3 14 2" />
        <path d="M107 168l2 2M178 168h4M224 168h3M232 168l2 1M265 168l3-1M301 168h5M312 167v3" stroke="#555" strokeWidth="2" />
      </svg>
    </div>
  );
}

/* ---------- right column ---------- */
function Header({ title, icon, open, prefs, track = "tracking-[0.022em]" }: { title: string; icon: React.ReactNode; open?: boolean; prefs?: boolean; track?: string }) {
  return (
    <div className="flex h-[37px] shrink-0 items-center pl-[7px] pr-[4px] pt-[5px]">
      <div className="w-[21px] h-[21px] mt-[4px] rounded-[5px] border-2 border-black bg-white flex items-center justify-center">
        {open ? (
          <div className="border-x-[5px] border-x-transparent border-t-[6px] border-t-black" />
        ) : (
          <div className="border-y-[5px] border-y-transparent border-l-[5px] border-l-black" />
        )}
      </div>
      <div className="w-[30px] ml-[7px] -mt-[3px]">{icon}</div>
      <div className={`ml-[17px] -mt-[4px] flex-1 text-[26px] leading-[34px] whitespace-nowrap ${track}`}>{title}</div>
      {prefs && <Prefs className="w-[26px] h-[26px] mt-[4px] mr-[8px]" />}
      <Svg className="w-[23px] h-[22px] mt-[4px] mr-[9px]" box="0 0 23 22">
        <path d="M1 11h10M5 8h6v6H5z" stroke="#666" strokeWidth="1.500" fill="#ddd" />
        <path d="M12 3l4 5 6-4v14l-6-4-4 5z" stroke="#555" strokeWidth="1.600" fill="#b5b5b5" />
      </Svg>
      <div className="w-[23px] h-[23px] mt-[4px] rounded-[4px] bg-[#666]">
        <Svg className="w-[23px] h-[23px]" box="0 0 23 23"><path d="m6 5 11 13M17 5 6 18" stroke="#fff" strokeWidth="5" /></Svg>
      </div>
    </div>
  );
}

function Panel({ h, children }: { h: string; children: React.ReactNode }) {
  return (
    <div className={`${h} w-[962px] shrink-0 flex flex-col bg-[#eeeeee] border border-[#a0a0a0] shadow-[inset_2px_3px_0_#fff,2px_2px_0_#fff] overflow-hidden`}>
      {children}
    </div>
  );
}

function Btn({ w, off, children, className = "" }: { w: string; off?: boolean; children: React.ReactNode; className?: string }) {
  return (
    <div className={`${w} h-[48px] shrink-0 rounded-[12px] flex items-center justify-center text-[24px] leading-[32px] tracking-[-0.015em] whitespace-nowrap shadow-[0_1px_3px_rgba(0,0,0,0.35)] ${off ? "bg-[#f6f6f6] text-[#8a8a8a] opacity-95" : "bg-white"} ${className}`}>
      {children}
    </div>
  );
}

const listBox = "mx-[3px] border-x-2 border-b-3 border-[#999] border-t-3 border-t-[#666] bg-white shrink-0";
const ic = "w-[30px] h-[30px]";
const bi = "w-[35px] h-[35px]";

const rows: [string, string][] = [
  ["addr:postcode", "<2 different, 539 unset>"],
  ["bench", "<2 different, 541 unset>"],
  ["bin", "<4 'yes', 541 unset>"],
];
const measures: [string, React.ReactNode][] = [
  ["Path Length", "< 0.001 m"], ["Selection Length", "10.343 km"], ["Selection Area", "499.492 m²"], ["Selection Radius", "< 0.001 m"], ["Angle", "38.2 °"],
];

function RightPanels() {
  return (
    <div className="flex-1 bg-[#eeeeee] pl-[8px] flex flex-col h-[1886px]">
      <Panel h="h-[223px]">
        <Header title="Layers" open icon={<Layers className={ic} />} />
        <div className={`${listBox} h-[113px] mt-[6px] pt-px px-[2px]`}>
          <div className="flex h-[32px] items-center bg-[#eeeeee]">
            <div className="w-[189px] shrink-0 flex items-center">
              <Svg className="w-[22px] h-[22px] ml-[3px]" box="0 0 22 22"><circle cx="11" cy="11" r="10.500" fill="#358a26" /><path d="m5 11 4 5 7-11" stroke="#fff" strokeWidth="3" /></Svg>
              <Eye className="w-[32px] h-[32px] ml-[76px] mt-[7px]" />
              <span className="text-[24px] ml-[14px] leading-[32px]">[1]</span>
            </div>
            <div className="flex-1 h-full bg-[#1d49d8] text-white font-bold text-[25px] leading-[30px] flex items-center pl-[3px] tracking-[-0.01em]">
              <Svg className="w-[30px] h-[28px] mr-[9px]" box="0 0 48 48">
                <path d="M6 4v40M22 44 46 6v38H22" stroke="#000" strokeWidth="3.500" />
                {[[6, 5], [6, 43], [22, 20], [22, 43], [44, 8], [44, 43]].map(([x, y], i) => (
                  <N key={i} x={x} y={y} s={6} w={4} />
                ))}
              </Svg>
              Data Layer 2
            </div>
          </div>
        </div>
        <div className="flex gap-[12px] pl-[12px] pt-[9px]">
          <Btn w="w-[178px]" off className="pr-[3px]"><Up className="w-[31px] h-[31px]" /></Btn>
          <Btn w="w-[178px]" off className="pr-[3px]"><Down c={GRAY} s={GRAY} className="w-[31px] h-[31px]" /></Btn>
          <Btn w="w-[178px]" off className="pr-[3px]"><Layers gray check className={bi} /></Btn>
          <Btn w="w-[178px]" className="pr-[3px]"><Eye bar className="w-[40px] h-[36px]" /></Btn>
          <Btn w="w-[178px]" className="pr-[3px]"><Trash className={bi} /></Btn>
        </div>
      </Panel>

      <Panel h="h-[331px] mt-[13px]">
        <Header title="Objects: 545 / Tags: 49 / Memberships: 1" track="tracking-[0.04em]" open icon={<Tag className="w-[32px] h-[32px] -mt-1" />} />
        <div className={`${listBox} h-[220px] mt-[6px] px-[2px] pt-px flex overflow-hidden`}>
          <div className="w-[919px] shrink-0 overflow-hidden">
            <div className="bg-[#eeeeee] h-[92px] px-[7px]">
              <div className="flex items-center h-[42px] mb-[5px] pl-[3px] text-[26px] tracking-[0.038em]">
                <div className="w-[32px] h-[25px] bg-[#0a12a5] flex items-center justify-center mr-[7px]">
                  <div className="w-[26px] h-[19px] rounded-[5px] border-2 border-white text-white text-[15px] leading-[15px] font-bold text-center">1</div>
                </div>
                <span className="leading-[34px]">Annotation/Address ...</span>
              </div>
              <div className="h-[38px] bg-white border border-[#dcdcdc] border-b-2 border-b-[#aaa]" />
            </div>
            <div className="flex h-[32px] pb-[3px] text-[22px] leading-[26px] items-center pl-[6px]">
              <div className="w-[453px] border-r-2 border-[#ddd] h-[22px] flex items-center">Key</div>
              <div className="pl-[7px]">Value</div>
            </div>
            {rows.map(([a, b], i) => (
              <div key={a} className={`flex h-[32px] text-[24px] leading-[30px] tracking-[0.025em] ${i === 0 ? "text-white" : ""}`}>
                <div className={`w-[459px] h-[30px] pl-[2px] mr-[2px] ${i === 0 ? "bg-[#1d49d8]" : ""}`}>{a}</div>
                <div className={`w-[456px] h-[30px] pl-[5px] italic tracking-[0.067em] ${i === 0 ? "bg-[#1d49d8]" : ""}`}>{b}</div>
              </div>
            ))}
          </div>
          <div className="flex-1 bg-[#fafafa] border-x border-[#e4e4e4] flex justify-center pt-[3px]">
            <div className="w-[16px] h-[36px] rounded-full bg-[#c1c1c1]" />
          </div>
        </div>
        <div className="flex gap-[12px] pl-[10px] pt-[9px]">
          <Btn w="w-[306px]"><Plus className={bi} /><span className="ml-[8px]">Add</span></Btn>
          <Btn w="w-[306px]"><EditI className="w-[38px] h-[38px]" /><span className="ml-[5px]">Edit</span></Btn>
          <Btn w="w-[306px]"><Trash className={bi} /><span className="ml-[8px]">Delete</span></Btn>
        </div>
      </Panel>

      <Panel h="h-[40px] mt-[13px]"><Header title="Sel.: Rel.:1 / Ways:116 / Nodes:428" track="tracking-[0.04em]" icon={<Sel className={ic} />} /></Panel>
      <Panel h="h-[331px]">
        <Header title="Relations: 1" track="tracking-[0.03em]" open icon={<Rel className={ic} />} />
        <div className="h-[38px] shrink-0 mx-[9px] mt-[13px] bg-white border border-[#dcdcdc] border-b-2 border-b-[#aaa]" />
        <div className={`${listBox} h-[168px] mt-[7px] pt-[3px] pl-[4px] flex items-start`}>
          <Rel className={ic} />
          <span className="ml-[9px] text-[24px] leading-[34px] tracking-[0.045em]">route ("20", 137 members) [id: 299720]</span>
        </div>
        <div className="flex gap-[12px] pl-[12px] pt-[9px]">
          <Btn w="w-[178px]" className="pr-[3px]"><Plus className={bi} /></Btn>
          <Btn w="w-[178px]" off className="pr-[3px]"><EditI gray className="w-[40px] h-[40px]" /></Btn>
          <Btn w="w-[178px]" off className="pr-[3px]"><Dup gray className={bi} /></Btn>
          <Btn w="w-[178px]" off className="pr-[3px]"><Trash gray className={bi} /></Btn>
          <Btn w="w-[178px]" off className="pr-[3px]"><Marquee gray className="w-[40px] h-[40px]" /></Btn>
        </div>
      </Panel>

      <Panel h="h-[40px] mt-[13px]"><Header title="Command Stack" track="tracking-[0.016em]" icon={<Stack className={ic} />} /></Panel>
      <Panel h="h-[40px]"><Header title="19 Authors" icon={<Authors className={ic} />} /></Panel>
      <Panel h="h-[40px]"><Header title="Conflict" icon={<Conflict className={ic} />} /></Panel>
      <Panel h="h-[331px]">
        <Header title="Validation Results" open prefs icon={<Check className={ic} />} />
        <div className={`${listBox} h-[220px] mt-[6px]`} />
        <div className="flex gap-[12px] pl-[12px] pt-[10px]">
          <Btn w="w-[146px]" off><Marquee gray className="w-[40px] h-[40px]" /><span className="ml-[2px]">Select</span></Btn>
          <Btn w="w-[146px]" off><Loupe gray className="w-[38px] h-[38px]" /><span className="ml-[3px]">Lookup</span></Btn>
          <Btn w="w-[146px]"><Check className="w-[40px] h-[40px]" /><span className="ml-[4px]">Validat...</span></Btn>
          <Btn w="w-[146px]" off><Wrench className="w-[37px] h-[37px]" /><span className="ml-[6px]">Fix</span></Btn>
          <Btn w="w-[146px]" off><Wrench className="w-[37px] h-[37px]" /><span className="ml-[6px]">Ignore</span></Btn>
          <Btn w="w-[146px]"><Wrench blue className="w-[37px] h-[37px]" /><span className="ml-[6px]">Manag...</span></Btn>
        </div>
      </Panel>

      <Panel h="h-[40px] mt-[13px]"><Header title="Filter Hidden: 0 Disabled: 0" track="tracking-[0.029em]" icon={<Funnel className={ic} />} /></Panel>
      <Panel h="h-[40px]"><Header title="Notes" icon={<Pin className={ic} />} /></Panel>
      <Panel h="h-[335px]">
        <Header title="Measured values" open icon={<Ruler className="w-[32px] h-[32px]" />} />
        <div className="mt-[8px] shrink-0">
          {measures.map(([a, b]) => (
            <div key={a} className="flex h-[44px] items-center text-[26px] leading-[36px] pl-[2px]">
              <div className="w-[480px] tracking-[0.02em]">{a}</div>
              <div className="tracking-[0.045em] -ml-px">{b}</div>
            </div>
          ))}
        </div>
        <div className="pl-[8px] mt-[11px]">
          <Btn w="w-[946px]"><Marquee className="w-[38px] h-[38px]" /><span className="ml-[6px]">Reset</span></Btn>
        </div>
      </Panel>
      <Panel h="h-[39px] mt-[3px]"><Header title="Todo list" icon={<Todo className="w-[32px] h-[32px]" />} /></Panel>
    </div>
  );
}

/* ---------- status bar ---------- */
const cell = "h-[38px] shrink-0 bg-[#b9cfe6] flex items-center text-[26px] leading-[36px] whitespace-nowrap";
function StatusBar() {
  return (
    <div className="h-[60px] shrink-0 bg-[#eeeeee] border-t-2 border-[#8f8f8f] flex pt-[10px] gap-[6px]">
      <div className={`${cell} w-[234px]`}>
        <Svg className="w-[36px] h-[36px] -ml-[7px]" box="0 0 36 36"><circle cx="17" cy="18" r="16" stroke="#000" strokeWidth="2" /><path d="M1 18h32" stroke="#f5442a" strokeWidth="4" /></Svg>
        <span className="ml-[5px] tracking-[0.048em]">46.5373163</span>
      </div>
      <div className={`${cell} w-[258px]`}>
        <Svg className="w-[36px] h-[36px]" box="0 0 36 36"><circle cx="18" cy="18" r="16" stroke="#000" strokeWidth="2" /><path d="M18 0v36" stroke="#f5442a" strokeWidth="4" /></Svg>
        <span className="ml-[7px] tracking-[0.048em]">24.5959186</span>
      </div>
      <div className={`${cell} w-[162px]`}>
        <Svg className="w-[36px] h-[36px]" box="0 0 36 36"><circle cx="18" cy="19" r="16" stroke="#000" strokeWidth="2" /><path d="M18 18 34 3" stroke="#f5442a" strokeWidth="5" /></Svg>
      </div>
      <div className={`${cell} w-[162px]`}>
        <Svg className="w-[36px] h-[36px]" box="0 0 36 36"><path d="M25 4 2 29h33" stroke="#000" strokeWidth="4" /><path d="M24 8q9 8 8 20" stroke="#f5442a" strokeWidth="2" /></Svg>
      </div>
      <div className={`${cell} w-[210px]`}>
        <Svg className="w-[36px] h-[36px]" box="0 0 36 36"><path d="M1.500 18h33v12h-33zM7 30v-6M12 30v-4M17 30v-6M22 30v-4M27 30v-6" stroke="#000" strokeWidth="2.500" /></Svg>
        <span className="ml-[7px] tracking-[0.04em]">10.34 km</span>
      </div>
      <div className={`${cell} w-[1121px]`}>
        <Svg className="w-[36px] h-[36px]" box="0 0 36 36">
          <path d="M5 7h25" stroke={RED} strokeWidth="5" /><N x={5} y={7} /><N x={31} y={7} />
          <path d="M16 10v22l5-4 4 8 4-2-4-8h7z" fill="#fff" stroke="#000" strokeWidth="1.800" />
        </Svg>
        <span className="ml-[5px] tracking-[0.02em]">(no object)</span>
      </div>
      <div className="h-[38px] w-[1376px] ml-px bg-white border-y border-[#ddd] text-[26px] leading-[36px] whitespace-nowrap pl-[12px] overflow-hidden tracking-[0.0275em]">
        add to selection (Ctrl to toggle); Shift–Ctrl to rotate selected; Alt–Ctrl to scale selected; or change selection
      </div>
    </div>
  );
}

/* ---------- annotations drawn over the window ---------- */
const GREEN = "#739c46";
const REDA = "#e64327";
function Arrow({ from, to, c, w, via }: { from: [number, number]; to: [number, number]; c: string; w: number; via?: [number, number] }) {
  const src = via ?? from;
  const dx = to[0] - src[0];
  const dy = to[1] - src[1];
  const l = Math.hypot(dx, dy);
  const u = [dx / l, dy / l];
  const b = [to[0] - u[0] * 26, to[1] - u[1] * 26];
  const n = [to[0] - u[0] * 20, to[1] - u[1] * 20];
  const line = via ? `M${from[0]} ${from[1]}Q${via[0]} ${via[1]} ${n[0]} ${n[1]}` : `M${from[0]} ${from[1]}L${n[0]} ${n[1]}`;
  return (
    <g className="drop-shadow-[1px_3px_2px_rgba(0,0,0,0.35)]">
      <path d={line} stroke={c} strokeWidth={w} />
      <path d={`M${to[0]} ${to[1]}L${b[0] - u[1] * 13} ${b[1] + u[0] * 13}L${b[0] + u[1] * 13} ${b[1] - u[0] * 13}Z`} fill={c} />
    </g>
  );
}

export default function App() {
  return (
    <div className="relative w-[3564px] h-[2118px] overflow-hidden bg-[#28282b] flex flex-col text-black font-['Open_Sans','Noto_Sans',sans-serif]">
      <MenuBar />
      <div className="h-[58px] shrink-0 bg-[#f4f4f4] border-b-2 border-[#c8c8c8] flex items-center rounded-tr-[16px]">
        <div className="flex gap-[16px] pl-[4px] w-[120px] shrink-0">
          <div className="w-6 h-6 rounded-full bg-[#ec6a5e] border border-[#d0554a]" />
          <div className="w-6 h-6 rounded-full bg-[#f4bf4f] border border-[#d8a33c]" />
          <div className="w-6 h-6 rounded-full bg-[#61c554] border border-[#50a845]" />
        </div>
        <div className="flex-1 text-center mr-[133px] text-[26px] leading-[30px] font-semibold font-[Inter] text-[#464646] tracking-[0.018em]">Java OpenStreetMap Editor</div>
      </div>
      <Toolbar />
      <div className="h-[4px] shrink-0 bg-[#eeeeee] border-t-2 border-[#5f6260]" />
      <div className="flex h-[1886px] shrink-0">
        <div className="-mt-[2px]"><LeftBar /></div>
        <MapView />
        <RightPanels />
      </div>
      <StatusBar />
      <div className="h-[8px] bg-linear-to-r from-[#1c1b20] via-[#6d665e] to-[#24232a]" />
      <svg viewBox="0 0 3564 2118" className="absolute inset-0 w-full h-full pointer-events-none" fill="none">
        <Arrow from={[447, 367]} to={[247, 26]} c={GREEN} w={5.5} />
        <Arrow from={[899, 312]} to={[1024, 33]} c={GREEN} w={5.5} />
        <Arrow from={[1339, 325]} to={[1525, 26]} c={GREEN} w={5.5} />
        <Arrow from={[655, 909]} to={[67, 1873]} c={REDA} w={4.5} />
        <Arrow from={[650, 1235]} via={[742, 1620]} to={[868, 2044]} c={REDA} w={4.5} />
        <Arrow from={[1989, 1148]} to={[2605, 1688]} c={REDA} w={4.5} />
        <ellipse cx="3143" cy="1790" rx="115" ry="32" stroke={REDA} strokeWidth="5" className="drop-shadow-[1px_3px_2px_rgba(0,0,0,0.35)]" />
      </svg>
    </div>
  );
}
